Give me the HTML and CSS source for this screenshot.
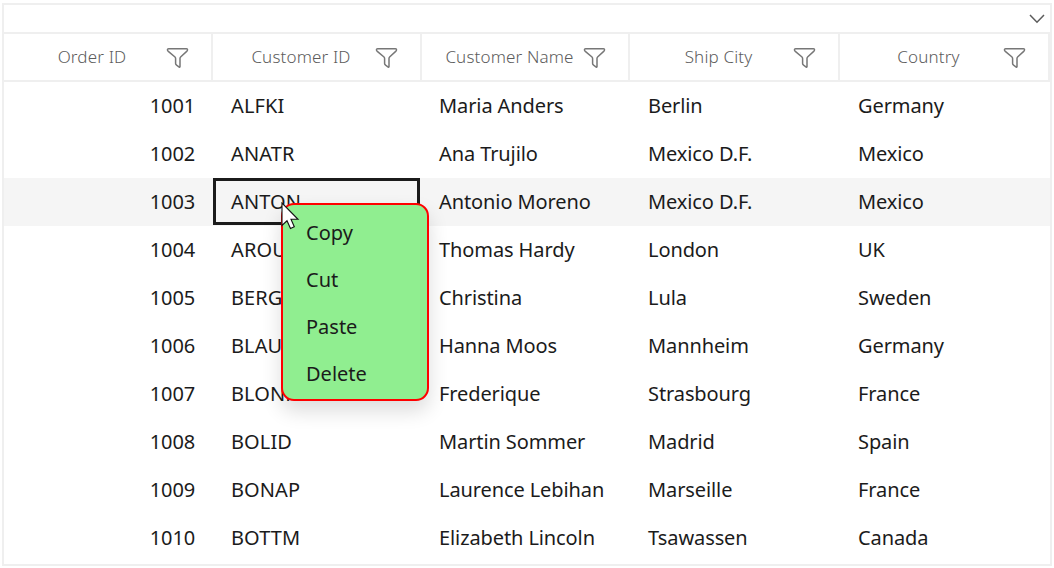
FILE: index.html
```html
<!DOCTYPE html>
<html lang="en">
<head>
  <meta charset="UTF-8">
  <meta name="viewport" content="width=device-width, initial-scale=1.0">
  <title>Orders</title>
  <link rel="stylesheet" href="styles.css">
</head>
<body>
  <svg class="defs">
    <symbol id="filter" viewBox="0 0 24 22">
      <path d="M2.6 1.7H20.4Q21.6 1.7 21.5 3Q21.4 3.8 20.7 4.4L14.6 10Q14 10.6 14 11.4V19.6Q14 20.5 13.2 20L10.6 18.2Q9.6 17.4 9.6 16.4V11.4Q9.6 10.6 9 10L2.3 4.4Q1.4 3.6 1.4 2.8Q1.5 1.7 2.6 1.7Z"/>
    </symbol>
  </svg>

  <div class="grid">
    <div class="group-area">
      <svg class="chevron" viewBox="0 0 16 10"><path d="M1 1L8 8.2L15 1"/></svg>
    </div>
    <div class="header">
      <div class="th"><span>Order ID</span><svg class="filter"><use href="#filter"/></svg></div>
      <div class="th"><span>Customer ID</span><svg class="filter"><use href="#filter"/></svg></div>
      <div class="th"><span>Customer Name</span><svg class="filter"><use href="#filter"/></svg></div>
      <div class="th"><span>Ship City</span><svg class="filter"><use href="#filter"/></svg></div>
      <div class="th"><span>Country</span><svg class="filter"><use href="#filter"/></svg></div>
    </div>
    <div id="rows"></div>
  </div>

  <div class="menu">
    <div class="menu-item">Copy</div>
    <div class="menu-item">Cut</div>
    <div class="menu-item">Paste</div>
    <div class="menu-item">Delete</div>
  </div>
  <svg class="cursor" viewBox="0 0 20 28"><path d="M1 1V23.5L6 18.8L9.5 26.5L13.3 24.8L10 17.3H17Z"/></svg>

  <script>
    const orders = [
      [1001, "ALFKI", "Maria Anders", "Berlin", "Germany"],
      [1002, "ANATR", "Ana Trujilo", "Mexico D.F.", "Mexico"],
      [1003, "ANTON", "Antonio Moreno", "Mexico D.F.", "Mexico"],
      [1004, "AROUT", "Thomas Hardy", "London", "UK"],
      [1005, "BERGS", "Christina", "Lula", "Sweden"],
      [1006, "BLAUS", "Hanna Moos", "Mannheim", "Germany"],
      [1007, "BLONP", "Frederique", "Strasbourg", "France"],
      [1008, "BOLID", "Martin Sommer", "Madrid", "Spain"],
      [1009, "BONAP", "Laurence Lebihan", "Marseille", "France"],
      [1010, "BOTTM", "Elizabeth Lincoln", "Tsawassen", "Canada"]
    ];
    const currentId = 1003;
    const rows = document.getElementById("rows");

    orders.forEach(order => {
      const row = document.createElement("div");
      row.className = order[0] === currentId ? "row current" : "row";
      order.forEach(value => {
        const cell = document.createElement("div");
        cell.className = "cell";
        cell.innerText = value;
        row.appendChild(cell);
      });
      rows.appendChild(row);
    });
  </script>
</body>
</html>
```
FILE: styles.css
```css
* {
  box-sizing: border-box;
}
body {
  margin: 0;
  padding: 3px 2px 2px;
  height: 568px;
  overflow: hidden;
  background: #fff;
  color: #1b1b1b;
  font-family: "Noto Sans", sans-serif;
  font-size: 20px;
  font-weight: 385;
}
.defs {
  display: none;
}
.grid {
  width: 1050px;
  height: 563px;
  border: 2px solid #efefef;
}
.group-area {
  display: flex;
  justify-content: flex-end;
  align-items: center;
  height: 29px;
  padding-right: 5px;
  border-bottom: 2px solid #efefef;
}
.chevron {
  width: 16px;
  height: 10px;
  fill: none;
  stroke: #5c5c5c;
  stroke-width: 1.5;
}
.header, .row {
  display: grid;
  grid-template-columns: 209px 209px 208px 210px 210px;
}
.header {
  height: 48px;
  border-bottom: 2px solid #efefef;
}
.th {
  display: flex;
  align-items: center;
  padding: 2px 21px 0 0;
  border-right: 2px solid #efefef;
  color: #5c5c5c;
  font-size: 17px;
  font-weight: 350;
  letter-spacing: 0.15px;
}
.th span {
  flex: 1;
  text-align: center;
  white-space: nowrap;
  line-height: 24px;
  padding: 0 0 2px 14px;
}
.filter {
  width: 24px;
  height: 22px;
  flex: none;
  fill: none;
  stroke: #777;
  stroke-width: 1.5;
}
.row {
  height: 48px;
}
.cell {
  padding-left: 18px;
  line-height: 48px;
  white-space: nowrap;
}
.cell:first-child {
  padding: 0 18px 0 0;
  text-align: right;
  letter-spacing: -0.15px;
}
.cell:nth-child(2) {
  letter-spacing: 0.1px;
}
.cell:nth-child(3) {
  padding-left: 17px;
}
.cell:nth-child(n+3) {
  letter-spacing: -0.1px;
}
.row.current {
  background: #f5f5f5;
}
.row.current .cell:nth-child(2) {
  height: 47px;
  margin-right: 2px;
  padding-left: 15px;
  border: 3px solid #1b1b1b;
  line-height: 42px;
}
.menu {
  position: absolute;
  left: 281px;
  top: 203px;
  width: 148px;
  height: 198px;
  padding: 4px 0 0 23px;
  border: 2px solid #f00;
  border-radius: 13px;
  background: #90ee90;
  box-shadow: 0 10px 20px rgba(0, 0, 0, 0.14);
}
.menu-item {
  height: 47px;
  line-height: 47px;
}
.cursor {
  position: absolute;
  left: 281px;
  top: 202px;
  width: 20px;
  height: 28px;
  fill: #fff;
  stroke: #111;
  stroke-width: 1.1;
}
```
